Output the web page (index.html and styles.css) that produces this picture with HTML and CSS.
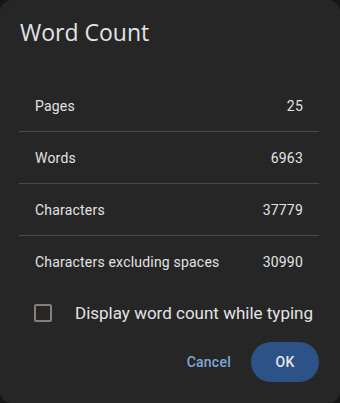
FILE: index.html
```html
<!DOCTYPE html>
<html lang="en">
<head>
  <meta charset="UTF-8" />
  <title>Word Count</title>
  <meta name="viewport" content="width=device-width, initial-scale=1.0" />
  <link rel="stylesheet" href="styles.css">
</head>
<body>

  <div class="dialog">
    <h1 class="title">Word Count</h1>

    <div class="stats">
      <div class="row"><span>Pages</span><span>25</span></div>
      <div class="row"><span>Words</span><span>6963</span></div>
      <div class="row"><span>Characters</span><span>37779</span></div>
      <div class="row"><span>Characters excluding spaces</span><span>30990</span></div>
    </div>

    <label class="check">
      <span class="box"></span>
      <span>Display word count while typing</span>
    </label>

    <div class="actions">
      <button class="btn-text">Cancel</button>
      <button class="btn-ok">OK</button>
    </div>
  </div>

</body>
</html>
```

FILE: styles.css
```css
body {
  margin: 0;
  background: #161616;
  font-family: Roboto, Arial, sans-serif;
  color: #e3e3e3;
}

.dialog {
  width: 340px;
  height: 403px;
  box-sizing: border-box;
  background: #262626;
  border-radius: 12px;
  padding: 14px 21px 0 19px;
}

.title {
  margin: 0 0 0 1px;
  font-family: "Open Sans", Roboto, sans-serif;
  font-size: 23px;
  font-weight: 400;
  line-height: 36px;
}

.stats {
  margin-top: 30px;
}

.row {
  display: flex;
  justify-content: space-between;
  align-items: center;
  height: 51px;
  padding: 0 16px;
  font-size: 14px;
  letter-spacing: 0.2px;
  border-bottom: 1px solid #4a4a4a;
}

.row:last-child {
  border-bottom: none;
}

.check {
  display: flex;
  align-items: center;
  gap: 23px;
  margin-top: 8px;
  padding-left: 15px;
  font-size: 17px;
  height: 36px;
}

.box {
  width: 14px;
  height: 14px;
  border: 2px solid #857f78;
  border-radius: 2px;
}

.actions {
  display: flex;
  justify-content: flex-end;
  align-items: center;
  gap: 20px;
  margin-top: 11px;
}

.actions button {
  font-family: Roboto, Arial, sans-serif;
  font-size: 14px;
  font-weight: 500;
  letter-spacing: 0.25px;
  border: none;
  cursor: pointer;
}

.btn-text {
  background: none;
  color: #7fa8d8;
  padding: 0;
}

.btn-ok {
  background: #2c5287;
  color: #e6e6e6;
  width: 68px;
  height: 40px;
  border-radius: 20px;
}
```
